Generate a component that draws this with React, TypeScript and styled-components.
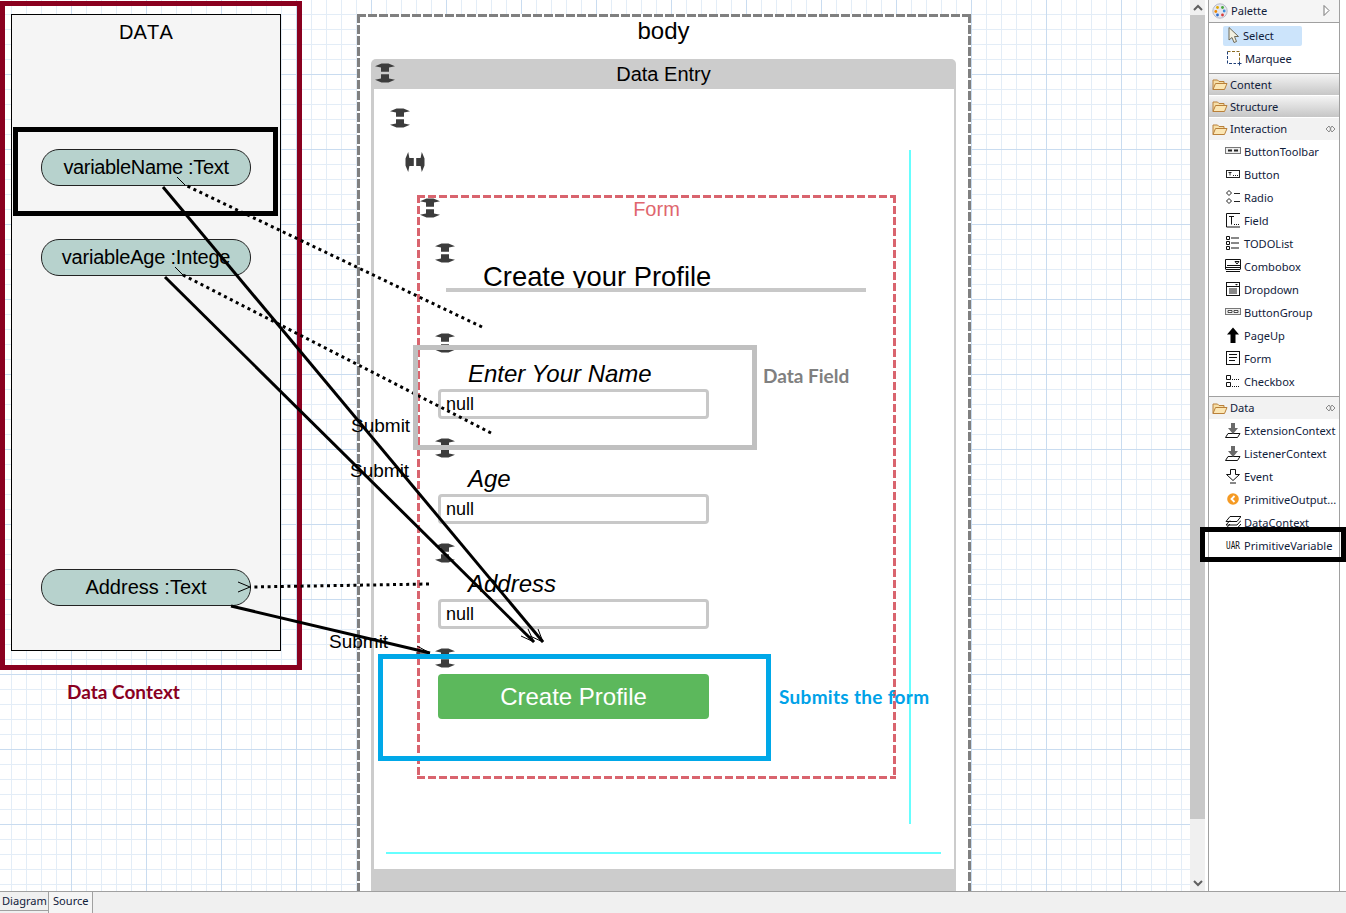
import * as React from 'react';
import styled, { createGlobalStyle, css } from 'styled-components';

const GlobalStyle = createGlobalStyle`
	html, body {
		margin: 0;
		padding: 0;
		background: #fff;
	}
	* {
		box-sizing: border-box;
	}
`;

const SANS = `'Liberation Sans', Arial, sans-serif`;
const NOTE = `Lato, 'Open Sans', sans-serif`;
const UI = `'Noto Sans', 'Open Sans', sans-serif`;

const dashed = (color: string, t: number, dash: number, gap: number) => css`
	background-image: repeating-linear-gradient(90deg, ${color} 0 ${dash}px, transparent ${dash}px ${dash + gap}px),
		repeating-linear-gradient(90deg, ${color} 0 ${dash}px, transparent ${dash}px ${dash + gap}px),
		repeating-linear-gradient(180deg, ${color} 0 ${dash}px, transparent ${dash}px ${dash + gap}px),
		repeating-linear-gradient(180deg, ${color} 0 ${dash}px, transparent ${dash}px ${dash + gap}px);
	background-size: 100% ${t}px, 100% ${t}px, ${t}px 100%, ${t}px 100%;
	background-position: 0 0, 0 100%, 0 0, 100% 0;
	background-repeat: no-repeat;
`;

const Root = styled.div`
	position: relative;
	width: 1346px;
	height: 913px;
	display: flex;
	flex-direction: column;
	overflow: hidden;
	font-family: ${SANS};
	color: #000;
`;
const Workbench = styled.div`
	flex: 1;
	min-height: 0;
	display: flex;
`;
const Canvas = styled.div`
	position: relative;
	flex: 1;
	overflow: hidden;
	background-color: #fff;
	background-image: linear-gradient(to right, #c9dcf0 1px, transparent 1px),
		linear-gradient(to bottom, #c9dcf0 1px, transparent 1px),
		linear-gradient(to right, #e3edf7 1px, transparent 1px),
		linear-gradient(to bottom, #e3edf7 1px, transparent 1px);
	background-size: 75px 75px, 75px 75px, 15px 15px, 15px 15px;
	background-position: 71px 0, 0 74px, 11px 0, 0 14px;
`;
const RightGutter = styled.div`
	width: 6px;
`;

/* data context, left column of the diagram */
const ContextFrame = styled.div`
	position: absolute;
	left: 0;
	top: 1px;
	width: 302px;
	height: 669px;
	border: 5px solid #8a001f;
	padding: 8px 0 0 6px;
`;
const DataPanel = styled.div`
	width: 270px;
	height: 637px;
	background: #f5f5f5;
	border: 1px solid #000;
	display: flex;
	flex-direction: column;
	align-items: center;
`;
const PanelTitle = styled.div`
	font-size: 20px;
	line-height: 24px;
	margin-top: 5px;
	font-kerning: none;
	letter-spacing: 0.2px;
`;
const VariablePill = styled.div<{ $gap: number; $tight?: number }>`
	width: 210px;
	height: 37px;
	flex: none;
	margin-top: ${p => p.$gap}px;
	background: #b7d2cd;
	border: 1px solid #222;
	border-radius: 18px;
	overflow: hidden;
	white-space: nowrap;
	text-align: center;
	font-size: 20px;
	line-height: 34px;
	letter-spacing: ${p => -(p.$tight || 0)}px;
`;
const ContextLabel = styled.div`
	position: absolute;
	left: 67px;
	top: 681px;
	font-family: ${NOTE};
	font-weight: 700;
	font-size: 19px;
	line-height: 22px;
	color: #8a001f;
`;
const HighlightFrame = styled.div`
	position: absolute;
	left: 13px;
	top: 127px;
	width: 265px;
	height: 89px;
	border: 5px solid #000;
`;

/* body container, runs past the bottom of the canvas */
const BodyFrame = styled.div`
	position: absolute;
	left: 357px;
	top: 14px;
	width: 614px;
	height: 900px;
	background-color: #fff;
	${dashed('#808080', 3, 9, 2)}
	padding: 3px 15px 0 14px;
	display: flex;
	flex-direction: column;
`;
const BodyTitle = styled.div`
	font-size: 24px;
	line-height: 28px;
	text-align: center;
	height: 42px;
`;
const EntryPanel = styled.div`
	flex: 1;
	display: flex;
	flex-direction: column;
	min-height: 0;
`;
const EntryHeader = styled.div`
	position: relative;
	height: 30px;
	background: #ccc;
	border-radius: 5px 5px 0 0;
	text-align: center;
	font-size: 20px;
	line-height: 30px;
`;
const EntryContent = styled.div`
	position: relative;
	flex: none;
	height: 780px;
	background: #fff;
	border-left: 3px solid #ccc;
	border-right: 2px solid #ccc;
	padding: 19px 0 0 16px;
`;
const EntryFooter = styled.div`
	flex: 1;
	background: #ccc;
`;
const Guide = styled.div<{ $vertical?: boolean }>`
	position: absolute;
	background: #66ffff;
	${p =>
		p.$vertical
			? css`
					left: 535px;
					top: 61px;
					width: 2px;
					height: 674px;
			  `
			: css`
					left: 12px;
					top: 763px;
					width: 555px;
					height: 2px;
			  `}
`;
const HandleWrap = styled.div<{ $left?: number; $top?: number; $abs?: boolean }>`
	width: 20px;
	height: 20px;
	line-height: 0;
	flex: none;
	margin-left: ${p => p.$left || 0}px;
	margin-top: ${p => p.$top || 0}px;
	${p =>
		p.$abs &&
		css`
			position: absolute;
			left: 4px;
			top: 4px;
			margin: 0;
		`}
`;

/* the form */
const FormFrame = styled.div`
	margin: 23px 0 0 27px;
	width: 479px;
	height: 584px;
	${dashed('#d9646e', 3, 8, 3)}
	padding-top: 3px;
	display: flex;
	flex-direction: column;
`;
const FormHead = styled.div`
	display: grid;
	grid-template-columns: 1fr auto 1fr;
	height: 20px;
	padding: 0 3px;
`;
const FormTitle = styled.div`
	font-size: 20px;
	line-height: 22px;
	color: #e0666e;
`;
const ProfileHeading = styled.div`
	width: 420px;
	height: 29px;
	margin-left: 29px;
	padding-left: 37px;
	border-bottom: 4px solid #c8c8c8;
	overflow: hidden;
	white-space: nowrap;
	font-size: 27.4px;
	line-height: 27px;
`;
const FieldLabel = styled.div`
	margin: 7px 0 1px 51px;
	font-size: 24px;
	line-height: 28px;
	font-style: italic;
	white-space: nowrap;
`;
const FieldBox = styled.div`
	width: 271px;
	height: 30px;
	margin: 0 0 19px 21px;
	border: 3px solid #c8c8c8;
	border-radius: 4px;
	background: #fff;
	padding-left: 5px;
	font-size: 18px;
	line-height: 24px;
`;
const SubmitButton = styled.button`
	width: 271px;
	height: 45px;
	flex: none;
	margin: 6px 0 0 21px;
	background: #5cb85c;
	border: 0;
	border-radius: 4px;
	color: #fff;
	font-family: ${SANS};
	font-size: 24px;
	padding: 0;
`;

/* annotations drawn over the diagram */
const FieldFrame = styled.div`
	position: absolute;
	left: 413px;
	top: 345px;
	width: 344px;
	height: 105px;
	border: 5px solid #c0c0c0;
`;
const FieldNote = styled.div`
	position: absolute;
	left: 763px;
	top: 365px;
	font-family: ${NOTE};
	font-weight: 700;
	font-size: 19px;
	line-height: 22px;
	color: #808080;
`;
const SubmitFrame = styled.div`
	position: absolute;
	left: 378px;
	top: 654px;
	width: 393px;
	height: 107px;
	border: 5px solid #00a8e8;
`;
const SubmitNote = styled.div`
	position: absolute;
	left: 779px;
	top: 686px;
	font-family: ${NOTE};
	font-weight: 700;
	font-size: 19px;
	letter-spacing: 0.3px;
	line-height: 22px;
	color: #00a2e8;
`;
const ConnectionLayer = styled.svg`
	position: absolute;
	left: 0;
	top: 0;
	pointer-events: none;
`;
const ConnectionLabel = styled.div<{ $x: number; $y: number }>`
	position: absolute;
	left: ${p => p.$x}px;
	top: ${p => p.$y}px;
	font-size: 19px;
	line-height: 24px;
`;

/* scrollbar and palette */
const ScrollBar = styled.div`
	width: 15px;
	margin-right: 3px;
	background: #f0f0f0;
	display: flex;
	flex-direction: column;
`;
const ScrollButton = styled.div`
	height: 15px;
	display: flex;
	align-items: center;
	justify-content: center;
`;
const ScrollThumb = styled.div`
	height: 804px;
	background: #c8c8c8;
`;
const ScrollRest = styled.div`
	flex: 1;
`;
const Palette = styled.div`
	width: 132px;
	background: #fff;
	border-left: 1px solid #a0a0a0;
	border-right: 1px solid #a0a0a0;
	font-family: ${UI};
	font-size: 11.1px;
	color: #10203a;
`;
const PaletteHead = styled.div`
	height: 23px;
	display: flex;
	align-items: center;
	padding: 0 9px 1px 3px;
	gap: 3px;
	background: #f5f5f5;
	border-bottom: 1px solid #a0a0a0;
`;
const Grow = styled.span`
	flex: 1;
`;
const ToolSection = styled.div`
	height: 51px;
	padding: 3px 0 0 14px;
	border-bottom: 1px solid #a0a0a0;
`;
const ToolRow = styled.div<{ $selected?: boolean }>`
	width: 79px;
	height: 20px;
	margin-bottom: 3px;
	display: flex;
	align-items: center;
	gap: 3px;
	padding-left: ${p => (p.$selected ? 5 : 3)}px;
	padding-bottom: 2px;
	border-radius: 2px;
	background: ${p => (p.$selected ? '#cce4fb' : 'transparent')};
`;
const DrawerHead = styled.div<{ $open?: boolean }>`
	height: 22px;
	display: flex;
	align-items: center;
	gap: 2px;
	padding: 0 3px 1px 3px;
	${p =>
		p.$open
			? css`
					background: #f2f2f2;
			  `
			: css`
					background: linear-gradient(#f4f4f4, #c6c6c6);
					border-bottom: 1px solid #fff;
			  `}
`;
const DrawerBody = styled.div<{ $last?: boolean }>`
	${p =>
		!p.$last &&
		css`
			height: 257px;
			border-bottom: 1px solid #a0a0a0;
		`}
`;
const PaletteItem = styled.div`
	height: 23px;
	display: flex;
	align-items: center;
	gap: 3px;
	padding: 0 0 1px 16px;
	white-space: nowrap;
	overflow: hidden;
`;
const IconSvg = styled.svg`
	flex: none;
`;
const BlackFrame = styled.div`
	position: absolute;
	left: 1200px;
	top: 527px;
	width: 146px;
	height: 35px;
	border: 5px solid #000;
`;

/* editor tabs */
const TabBar = styled.div`
	height: 22px;
	background: #f0f0f0;
	border-top: 1px solid #a0a0a0;
	display: flex;
	font-family: ${UI};
	font-size: 11.1px;
	color: #10203a;
`;
const DiagramTab = styled.div`
	width: 48px;
	height: 19px;
	padding-left: 2px;
	line-height: 18px;
	border-bottom: 1px solid #a0a0a0;
`;
const SourceTab = styled.div`
	width: 45px;
	padding-left: 4px;
	line-height: 18px;
	background: #f5f5f5;
	border-left: 1px solid #a0a0a0;
	border-right: 1px solid #a0a0a0;
`;

const Handle: React.FC<{ horizontal?: boolean; left?: number; top?: number; abs?: boolean }> = ({ horizontal, left, top, abs }) => (
	<HandleWrap $left={left} $top={top} $abs={abs}>
		<svg width={20} height={20} viewBox="0 0 20 20">
			<g transform={horizontal ? 'rotate(90 10 10)' : undefined}>
				<path d="M6.5 0.5H13.5L20 3.2L14 4.4V8.8H6V4.4L0 3.2Z" fill="#3c3c3c" />
				<path d="M6.5 19.5H13.5L20 16.8L14 15.6V11.2H6V15.6L0 16.8Z" fill="#3c3c3c" />
			</g>
		</svg>
	</HandleWrap>
);

const Ico: React.FC<{ children: React.ReactNode }> = ({ children }) => (
	<IconSvg width={16} height={16} viewBox="0 0 16 16" fill="none">
		{children}
	</IconSvg>
);

const FolderIcon = () => (
	<IconSvg width={16} height={14} viewBox="0 0 16 14">
		<path d="M1 12.5V3H5.5L7 4.5H12V6.5" fill="#f6dfa8" stroke="#b9803a" />
		<path d="M1 12.5L3.5 6.5H15L12.5 12.5Z" fill="#fbe6b4" stroke="#b9803a" />
	</IconSvg>
);

const PinIcon = () => (
	<IconSvg width={11} height={8} viewBox="0 0 11 8" fill="none" stroke="#8a8a8a">
		<path d="M4 1L1 4L4 7L6 4Z" />
		<path d="M7 1L10 4L7 7L5 4Z" />
	</IconSvg>
);

const PaletteIcon = () => (
	<IconSvg width={16} height={16} viewBox="0 0 16 16">
		<circle cx="8" cy="8" r="7.2" fill="#e4e6ee" stroke="#b8bcc8" />
		<circle cx="5.5" cy="4.5" r="1.4" fill="#e0a800" />
		<circle cx="10.5" cy="4.5" r="1.4" fill="#47a83c" />
		<circle cx="3.8" cy="8.5" r="1.4" fill="#f08a00" />
		<circle cx="12.2" cy="8" r="1.4" fill="#3c8fdc" />
		<circle cx="5.5" cy="12" r="1.4" fill="#2f6fd0" />
		<circle cx="10.5" cy="12" r="1.4" fill="#d83c3c" />
	</IconSvg>
);

const SelectIcon = () => (
	<IconSvg width={12} height={16} viewBox="0 0 12 16">
		<path d="M1 0.5V13L4 10.5L6 15.5L8.5 14.5L6.5 9.5H10.5Z" fill="#f2f0e0" stroke="#6f6a58" />
	</IconSvg>
);

const MarqueeIcon = () => (
	<Ico>
		<path d="M1.5 1.5H13.5V11" stroke="#8a6a20" strokeDasharray="3 1.5" />
		<path d="M1.5 1.5V13.5H10" stroke="#1f3f78" strokeDasharray="3 1.5" />
		<path d="M13.5 11.5V15.5M11.5 13.5H15.5" stroke="#1f3f78" />
	</Ico>
);

const items: Record<string, React.ReactNode> = {
	ButtonToolbar: (
		<Ico>
			<rect x="0.5" y="4.5" width="15" height="6" stroke="#777" fill="#eee" />
			<path d="M3 6.5H7V8.5H3ZM9 6.5H13V8.5H9Z" fill="#222" />
		</Ico>
	),
	Button: (
		<Ico>
			<rect x="1.5" y="4.5" width="13" height="7" stroke="#222" fill="#fff" />
			<path d="M3.5 6.5H6.5M5 6.5V9.5" stroke="#222" />
			<path d="M8 9.5H13" stroke="#222" strokeDasharray="1 1" />
		</Ico>
	),
	Radio: (
		<Ico>
			<path d="M4 1.5L6.5 4L4 6.5L1.5 4ZM4 9.5L6.5 12L4 14.5L1.5 12Z" stroke="#222" fill="#fff" />
			<path d="M9 4.5H15M9 12.5H15" stroke="#222" />
		</Ico>
	),
	Field: (
		<Ico>
			<path d="M15 1.5H1.5V15H15" stroke="#111" />
			<path d="M4 4.5H9M6.5 4.5V12.5" stroke="#111" />
			<path d="M9 12.5H15" stroke="#111" strokeDasharray="1 1" />
		</Ico>
	),
	TODOList: (
		<Ico>
			<path d="M1.5 1.5H4.5V4.5H1.5ZM1.5 6.5H4.5V9.5H1.5ZM1.5 11.5H4.5V14.5H1.5Z" stroke="#111" />
			<path d="M6 3H14M6 8H14M6 13H14" stroke="#111" />
		</Ico>
	),
	Combobox: (
		<Ico>
			<path d="M0.5 11.5V1.5H15.5V11.5" stroke="#111" />
			<path d="M10 3.5H14L12 6Z" stroke="#111" fill="#fff" />
			<path d="M2 7.5H15M1 9.5H15M1 11.5H15M1 13.5H15" stroke="#111" />
		</Ico>
	),
	Dropdown: (
		<Ico>
			<rect x="1.5" y="1.5" width="13" height="13" stroke="#111" fill="#fff" />
			<path d="M1.5 5.5H14.5M4 8H12M4 10H12M4 12H12" stroke="#111" />
			<path d="M10 3H13L11.5 4.5Z" fill="#111" />
		</Ico>
	),
	ButtonGroup: (
		<Ico>
			<rect x="0.5" y="4.5" width="15" height="6" stroke="#777" fill="#eee" />
			<path d="M3 6.5H7V8.5H3ZM9 6.5H13V8.5H9Z" stroke="#222" strokeWidth="0.8" fill="#fff" />
		</Ico>
	),
	PageUp: (
		<Ico>
			<path d="M8 0.5L14 7.5H10.5V16H5.5V7.5H2Z" fill="#000" />
		</Ico>
	),
	Form: (
		<Ico>
			<rect x="1.5" y="1.5" width="13" height="13" stroke="#111" fill="#fff" />
			<path d="M4 4.5H12M4 7.5H12M4 10.5H10" stroke="#111" />
		</Ico>
	),
	Checkbox: (
		<Ico>
			<path d="M1.5 2.5H5.5V6.5H1.5ZM1.5 9.5H5.5V13.5H1.5Z" stroke="#111" />
			<path d="M7 6.5H15M7 13.5H15" stroke="#111" strokeDasharray="1 1" />
		</Ico>
	),
	ExtensionContext: (
		<Ico>
			<path d="M0.5 15.5L3 11.5H15L12.5 15.5Z" stroke="#111" fill="#fff" />
			<path d="M6 1H10V6H13L8 12L3 6H6Z" fill="#6a6a6a" />
		</Ico>
	),
	ListenerContext: (
		<Ico>
			<path d="M0.5 15.5L3 11.5H15L12.5 15.5Z" stroke="#111" fill="#fff" />
			<path d="M6 1H10V6H13L8 12L3 6H6Z" fill="#6a6a6a" />
		</Ico>
	),
	Event: (
		<Ico>
			<path d="M5.5 1.5H10.5V6.5H14.5L8 12.5L1.5 6.5H5.5Z" stroke="#111" fill="#fff" />
			<path d="M5 15H11" stroke="#111" />
		</Ico>
	),
	'PrimitiveOutput...': (
		<Ico>
			<circle cx="8" cy="8" r="5.8" fill="#f59a23" />
			<path d="M9.5 5L6.5 8L9.5 11" stroke="#fff" strokeWidth="1.8" />
		</Ico>
	),
	DataContext: (
		<Ico>
			<path d="M1 7.5L5 2.5H16L12 7.5ZM1 11L5 6.5M12 11L16 6.5M1 11H12M1 14.5L5 10M1 14.5H12L16 10" stroke="#111" fill="none" />
		</Ico>
	),
	PrimitiveVariable: (
		<Ico>
			<text x="1" y="11.5" fontFamily="'DejaVu Sans Mono', monospace" fontSize="10" textLength="14" lengthAdjust="spacingAndGlyphs" fill="#111">
				UAR
			</text>
		</Ico>
	),
};

const interactionItems = [
	'ButtonToolbar',
	'Button',
	'Radio',
	'Field',
	'TODOList',
	'Combobox',
	'Dropdown',
	'ButtonGroup',
	'PageUp',
	'Form',
	'Checkbox',
];
const dataItems = ['ExtensionContext', 'ListenerContext', 'Event', 'PrimitiveOutput...', 'DataContext', 'PrimitiveVariable'];

const fields = [
	{ label: 'Enter Your Name', top: 41 },
	{ label: 'Age', top: 0 },
	{ label: 'Address', top: 0 },
];

const Connections = () => (
	<ConnectionLayer width={1190} height={891}>
		<g stroke="#000" fill="none">
			<path d="M163 187L543 642" strokeWidth="3" />
			<path d="M165 277L534 642" strokeWidth="3" />
			<path d="M231 606L430 653" strokeWidth="3" />
			<path d="M538 629L543 642L530 636M521 636L534 642L528 629M417 646L430 653L416 653" strokeWidth="1" />
			<path d="M482 327L185 185M491 433L183 275M429 584L250 587" strokeWidth="3" strokeDasharray="3 3.6" />
			<path d="M177 177L185 185M175 267L183 275M238 582L250 587L238 592" strokeWidth="1" />
		</g>
	</ConnectionLayer>
);

export default function App() {
	return (
		<Root>
			<GlobalStyle />
			<Workbench>
				<Canvas>
					<ContextFrame>
						<DataPanel>
							<PanelTitle>DATA</PanelTitle>
							<VariablePill $gap={105} $tight={0.33}>
								variableName :Text
							</VariablePill>
							<VariablePill $gap={53} $tight={0.2}>
								variableAge :Intege
							</VariablePill>
							<VariablePill $gap={293}>Address :Text</VariablePill>
						</DataPanel>
					</ContextFrame>
					<ContextLabel>Data Context</ContextLabel>

					<BodyFrame>
						<BodyTitle>body</BodyTitle>
						<EntryPanel>
							<EntryHeader>
								<Handle abs />
								Data Entry
							</EntryHeader>
							<EntryContent>
								<Handle />
								<Handle horizontal left={15} top={24} />
								<FormFrame>
									<FormHead>
										<Handle />
										<FormTitle>Form</FormTitle>
									</FormHead>
									<Handle left={18} top={25} />
									<ProfileHeading>Create your Profile</ProfileHeading>
									{fields.map(f => (
										<React.Fragment key={f.label}>
											<Handle left={18} top={f.top} />
											<FieldLabel>{f.label}</FieldLabel>
											<FieldBox>null</FieldBox>
										</React.Fragment>
									))}
									<Handle left={18} />
									<SubmitButton>Create Profile</SubmitButton>
								</FormFrame>
								<Guide $vertical />
								<Guide />
							</EntryContent>
							<EntryFooter />
						</EntryPanel>
					</BodyFrame>

					<Connections />
					<ConnectionLabel $x={351} $y={414}>
						Submit
					</ConnectionLabel>
					<ConnectionLabel $x={350} $y={459}>
						Submit
					</ConnectionLabel>
					<ConnectionLabel $x={329} $y={630}>
						Submit
					</ConnectionLabel>

					<HighlightFrame />
					<FieldFrame />
					<FieldNote>Data Field</FieldNote>
					<SubmitFrame />
					<SubmitNote>Submits the form</SubmitNote>
				</Canvas>

				<ScrollBar>
					<ScrollButton>
						<svg width={10} height={7} viewBox="0 0 10 7" fill="none" stroke="#606060" strokeWidth="2">
							<path d="M1 6L5 2L9 6" />
						</svg>
					</ScrollButton>
					<ScrollThumb />
					<ScrollRest />
					<ScrollButton>
						<svg width={10} height={7} viewBox="0 0 10 7" fill="none" stroke="#606060" strokeWidth="2">
							<path d="M1 1L5 5L9 1" />
						</svg>
					</ScrollButton>
				</ScrollBar>

				<Palette>
					<PaletteHead>
						<PaletteIcon />
						<span>Palette</span>
						<Grow />
						<svg width={7} height={11} viewBox="0 0 7 11" fill="#fff" stroke="#777">
							<path d="M1 0.5L6 5.5L1 10.5Z" />
						</svg>
					</PaletteHead>
					<ToolSection>
						<ToolRow $selected>
							<SelectIcon />
							<span>Select</span>
						</ToolRow>
						<ToolRow>
							<MarqueeIcon />
							<span>Marquee</span>
						</ToolRow>
					</ToolSection>
					<DrawerHead>
						<FolderIcon />
						<span>Content</span>
					</DrawerHead>
					<DrawerHead>
						<FolderIcon />
						<span>Structure</span>
					</DrawerHead>
					<DrawerHead $open>
						<FolderIcon />
						<span>Interaction</span>
						<Grow />
						<PinIcon />
					</DrawerHead>
					<DrawerBody>
						{interactionItems.map(name => (
							<PaletteItem key={name}>
								{items[name]}
								<span>{name}</span>
							</PaletteItem>
						))}
					</DrawerBody>
					<DrawerHead $open>
						<FolderIcon />
						<span>Data</span>
						<Grow />
						<PinIcon />
					</DrawerHead>
					<DrawerBody $last>
						{dataItems.map(name => (
							<PaletteItem key={name}>
								{items[name]}
								<span>{name}</span>
							</PaletteItem>
						))}
					</DrawerBody>
				</Palette>
				<RightGutter />
			</Workbench>
			<TabBar>
				<DiagramTab>Diagram</DiagramTab>
				<SourceTab>Source</SourceTab>
			</TabBar>
			<BlackFrame />
		</Root>
	);
}
